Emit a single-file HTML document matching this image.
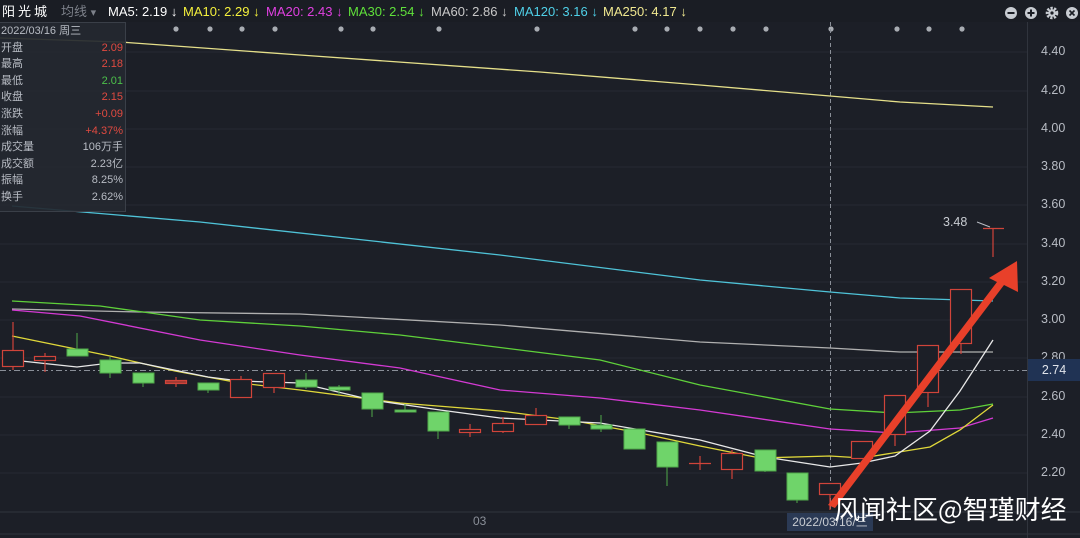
<!DOCTYPE html>
<html><head><meta charset="utf-8"><style>
body{margin:0;width:1080px;height:538px;overflow:hidden;background:#1c1f27;font-family:"Liberation Sans","Noto Sans CJK SC",sans-serif;position:relative}
.hdr{position:absolute;left:0;top:0;width:1080px;height:22px;background:#1a1d24;font-size:13px;line-height:24px;white-space:nowrap}
.hdr span{position:absolute;top:0}
.panel{position:absolute;left:0;top:22px;width:125px;height:188px;background:rgba(36,40,48,.92);border:1px solid #3a3f48;border-left:none;font-size:11px;color:#b8bcc4}
.panel div{height:16.6px;line-height:16.6px;position:relative;padding-left:1px}
.panel b{font-weight:normal;position:absolute;right:2px;top:0}
.ax{position:absolute;left:1041px;font-size:12.5px;color:#b8bcc4}
</style></head><body>
<svg width="1080" height="538" style="position:absolute;left:0;top:0">
<g stroke="#262a33" stroke-width="1">
<line x1="0" y1="52" x2="1027" y2="52"/><line x1="0" y1="91" x2="1027" y2="91"/><line x1="0" y1="129" x2="1027" y2="129"/><line x1="0" y1="167" x2="1027" y2="167"/><line x1="0" y1="205" x2="1027" y2="205"/><line x1="0" y1="244" x2="1027" y2="244"/><line x1="0" y1="282" x2="1027" y2="282"/><line x1="0" y1="320" x2="1027" y2="320"/><line x1="0" y1="358" x2="1027" y2="358"/><line x1="0" y1="397" x2="1027" y2="397"/><line x1="0" y1="435" x2="1027" y2="435"/><line x1="0" y1="473" x2="1027" y2="473"/>
</g>
<line x1="1027.5" y1="22" x2="1027.5" y2="538" stroke="#30343d"/>
<line x1="0" y1="512" x2="1080" y2="512" stroke="#30343d"/>
<line x1="0" y1="534" x2="1080" y2="534" stroke="#30343d"/>
<g fill="#a8acb2">
<circle cx="176" cy="29" r="2.6"/><circle cx="210" cy="29" r="2.6"/><circle cx="242" cy="29" r="2.6"/><circle cx="275" cy="29" r="2.6"/><circle cx="341" cy="29" r="2.6"/><circle cx="373" cy="29" r="2.6"/><circle cx="439" cy="29" r="2.6"/><circle cx="537" cy="29" r="2.6"/><circle cx="635" cy="29" r="2.6"/><circle cx="667" cy="29" r="2.6"/><circle cx="700" cy="29" r="2.6"/><circle cx="733" cy="29" r="2.6"/><circle cx="766" cy="29" r="2.6"/><circle cx="831" cy="29" r="2.6"/><circle cx="897" cy="29" r="2.6"/><circle cx="929" cy="29" r="2.6"/><circle cx="962" cy="29" r="2.6"/>
</g>
<line x1="830.5" y1="22" x2="830.5" y2="512" stroke="#8a8f98" stroke-dasharray="4,3"/>
<line x1="0" y1="370.5" x2="1027" y2="370.5" stroke="#8a8f98" stroke-dasharray="6,3,2,3"/>
<g fill="none" stroke-width="1.3">
<polyline stroke="#e6e08a" points="0,38 120,42 300,55 540,72 700,85 830,96 900,102 993,107"/>
<polyline stroke="#4fc3d8" points="12,206 200,222 500,255 700,280 830,292 900,298 993,301"/>
<polyline stroke="#b0b0b0" points="12,309 140,312 300,314 500,325 700,342 830,348 900,352 993,352"/>
<polyline stroke="#5fd13a" points="12,301 100,306 200,320 300,326 400,335 600,360 700,385 830,409 895,413 960,410 993,404"/>
<polyline stroke="#d43ad4" points="12,310 80,316 200,340 300,355 400,368 500,390 600,398 700,410 830,429 895,433 960,428 993,418"/>
<polyline stroke="#e0d83a" points="12,336 110,356 175,371 240,383 300,390 400,403 500,411 570,420 640,433 700,446 760,458 830,456 862,458 930,447 960,430 993,405"/>
<polyline stroke="#e8e8e8" points="12,360 77,367 110,363 140,363 208,377 240,381 300,383 372,400 440,410 500,418 600,423 700,440 765,457 830,467 862,463 895,456 930,431 960,391 993,340"/>
</g>
<g stroke="#d0443a" fill="none" stroke-width="1.2">
<line x1="13" y1="322" x2="13" y2="370"/><rect x="2.5" y="350.5" width="21" height="16" fill="#1c1f27"/>
<line x1="45" y1="353" x2="45" y2="372"/><rect x="34.5" y="356.5" width="21" height="4" fill="#1c1f27"/>
<line x1="176" y1="377" x2="176" y2="387"/><rect x="165.5" y="380.5" width="21" height="3" fill="#a03a33"/>
<line x1="241" y1="376" x2="241" y2="397"/><rect x="230.5" y="379.5" width="21" height="18" fill="#1c1f27"/>
<line x1="274" y1="373" x2="274" y2="393"/><rect x="263.5" y="373.5" width="21" height="14" fill="#1c1f27"/>
<line x1="470" y1="424" x2="470" y2="437"/><rect x="459.5" y="429.5" width="21" height="3" fill="#1c1f27"/>
<line x1="503" y1="417" x2="503" y2="433"/><rect x="492.5" y="423.5" width="21" height="8" fill="#1c1f27"/>
<line x1="536" y1="408" x2="536" y2="424"/><rect x="525.5" y="415.5" width="21" height="9" fill="#1c1f27"/>
<line x1="700" y1="456" x2="700" y2="470"/><line x1="689" y1="463.5" x2="711" y2="463.5"/>
<line x1="732" y1="450" x2="732" y2="479"/><rect x="721.5" y="453.5" width="21" height="16" fill="#1c1f27"/>
<line x1="830" y1="483" x2="830" y2="510"/><rect x="819.5" y="483.5" width="21" height="11" fill="#1c1f27"/>
<rect x="851.5" y="441.5" width="21" height="17" fill="#1c1f27"/>
<line x1="895" y1="434" x2="895" y2="446"/><rect x="884.5" y="395.5" width="21" height="39" fill="#1c1f27"/>
<line x1="928" y1="392" x2="928" y2="407"/><rect x="917.5" y="345.5" width="21" height="47" fill="#1c1f27"/>
<line x1="961" y1="343" x2="961" y2="354"/><rect x="950.5" y="289.5" width="21" height="54" fill="#1c1f27"/>
<line x1="993" y1="228" x2="993" y2="257"/><line x1="983" y1="228.5" x2="1004" y2="228.5"/>
</g>
<g fill="#6fd46a" stroke="#4fa84a" stroke-width="1">
<line x1="77" y1="333" x2="77" y2="356"/><rect x="67" y="349" width="21" height="7"/>
<line x1="110" y1="357" x2="110" y2="378"/><rect x="100" y="360" width="21" height="13"/>
<line x1="143" y1="373" x2="143" y2="387"/><rect x="133" y="373" width="21" height="10"/>
<line x1="208" y1="383" x2="208" y2="393"/><rect x="198" y="383" width="21" height="7"/>
<line x1="306" y1="373" x2="306" y2="389"/><rect x="296" y="380" width="21" height="7"/>
<line x1="339" y1="385" x2="339" y2="395"/><rect x="329" y="387" width="21" height="3"/>
<line x1="372" y1="393" x2="372" y2="417"/><rect x="362" y="393" width="21" height="16"/>
<line x1="405" y1="404" x2="405" y2="412"/><rect x="395" y="410" width="21" height="2"/>
<line x1="438" y1="412" x2="438" y2="439"/><rect x="428" y="412" width="21" height="19"/>
<line x1="569" y1="417" x2="569" y2="429"/><rect x="559" y="417" width="21" height="8"/>
<line x1="601" y1="415" x2="601" y2="432"/><rect x="591" y="425" width="21" height="4"/>
<line x1="634" y1="429" x2="634" y2="449"/><rect x="624" y="429" width="21" height="20"/>
<line x1="667" y1="442" x2="667" y2="486"/><rect x="657" y="442" width="21" height="25"/>
<line x1="765" y1="450" x2="765" y2="472"/><rect x="755" y="450" width="21" height="21"/>
<line x1="797" y1="473" x2="797" y2="503"/><rect x="787" y="473" width="21" height="27"/>
</g>
<polygon fill="#e8402a" points="828,505 835,508 1004,285 1018,292 1017,261 989,278 997,282"/>
<line x1="977" y1="222" x2="990" y2="227" stroke="#b8bcc4"/>
</svg>
<div class="hdr">
<span style="left:2px;color:#fff;font-size:13px;letter-spacing:3px">阳光城</span>
<span style="left:61px;color:#7d818a">均线 <small>▾</small></span>
<span style="left:108px;color:#fff">MA5: 2.19 ↓</span>
<span style="left:183px;color:#f4f03c">MA10: 2.29 ↓</span>
<span style="left:266px;color:#e040e0">MA20: 2.43 ↓</span>
<span style="left:348px;color:#5fe03a">MA30: 2.54 ↓</span>
<span style="left:431px;color:#c8c8c8">MA60: 2.86 ↓</span>
<span style="left:514px;color:#4fd0e8">MA120: 3.16 ↓</span>
<span style="left:603px;color:#f0e890">MA250: 4.17 ↓</span>
</div>
<svg width="80" height="24" style="position:absolute;left:1000px;top:0">
<g fill="#c8ccd2" transform="translate(11,13)"><circle r="6"/><rect x="-3.5" y="-1" width="7" height="2" fill="#1a1d24"/></g>
<g fill="#c8ccd2" transform="translate(31,13)"><circle r="6"/><rect x="-3.5" y="-1" width="7" height="2" fill="#1a1d24"/><rect x="-1" y="-3.5" width="2" height="7" fill="#1a1d24"/></g>
<g transform="translate(52,13)"><circle r="4.8" fill="none" stroke="#c8ccd2" stroke-width="3" stroke-dasharray="2.2,1.3"/><circle r="3.8" fill="#c8ccd2"/><circle r="1.6" fill="#1a1d24"/></g>
<g fill="#c8ccd2" transform="translate(72,13)"><circle r="6"/><path d="M-2.5,-2.5L2.5,2.5M2.5,-2.5L-2.5,2.5" stroke="#1a1d24" stroke-width="1.6"/></g>
</svg>
<div class="panel">
<div>2022/03/16 周三</div>
<div>开盘<b style="color:#e04a40">2.09</b></div>
<div>最高<b style="color:#e04a40">2.18</b></div>
<div>最低<b style="color:#4cc04a">2.01</b></div>
<div>收盘<b style="color:#e04a40">2.15</b></div>
<div>涨跌<b style="color:#e04a40">+0.09</b></div>
<div>涨幅<b style="color:#e04a40">+4.37%</b></div>
<div>成交量<b>106万手</b></div>
<div>成交额<b>2.23亿</b></div>
<div>振幅<b>8.25%</b></div>
<div>换手<b>2.62%</b></div>
</div>
<div class="ax" style="top:44px">4.40</div>
<div class="ax" style="top:83px">4.20</div>
<div class="ax" style="top:121px">4.00</div>
<div class="ax" style="top:159px">3.80</div>
<div class="ax" style="top:197px">3.60</div>
<div class="ax" style="top:236px">3.40</div>
<div class="ax" style="top:274px">3.20</div>
<div class="ax" style="top:312px">3.00</div>
<div class="ax" style="top:350px">2.80</div>
<div class="ax" style="top:389px">2.60</div>
<div class="ax" style="top:427px">2.40</div>
<div class="ax" style="top:465px">2.20</div>
<div style="position:absolute;left:1028px;top:359px;width:52px;height:22px;background:#203354;color:#e0e4ea;font-size:12.5px;line-height:22px;text-align:center">2.74</div>
<div style="position:absolute;left:943px;top:215px;color:#c8ccd2;font-size:12.5px">3.48</div>
<div style="position:absolute;left:473px;top:514px;color:#8a8f98;font-size:12px">03</div>
<div style="position:absolute;left:787px;top:513px;width:86px;height:18px;background:#2b3a55;color:#c8ccd2;font-size:12px;line-height:18px;text-align:center">2022/03/16/三</div>
<div style="position:absolute;left:834px;top:493px;color:#fff;font-size:26px;font-family:'Noto Sans CJK SC','Liberation Sans',sans-serif;white-space:nowrap;line-height:32px">风闻社区@智瑾财经</div>
</body></html>
